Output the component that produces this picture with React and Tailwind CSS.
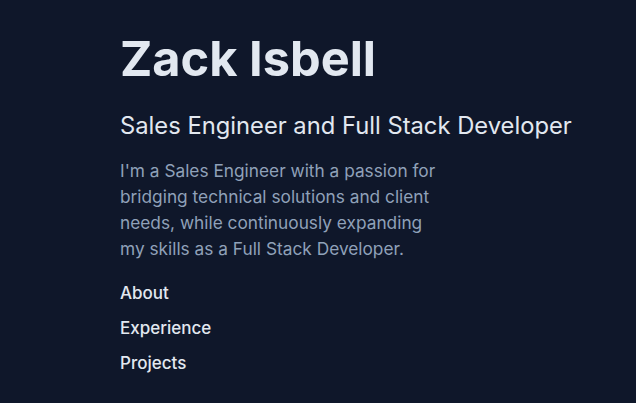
export default function App() {
  return (
    <div
      className="min-h-screen bg-[#0f172a] text-slate-200"
      style={{ fontFamily: "Inter, 'Noto Sans', sans-serif" }}
    >
      <header className="pl-[120px] pt-[35px]">
        <h1 className="text-[48.7px] leading-none font-bold text-slate-200">Zack Isbell</h1>
        <h2 className="mt-[26px] text-[23.75px] leading-8 font-normal text-slate-200">
          Sales Engineer and Full Stack Developer
        </h2>
        <p className="mt-4 max-w-xs text-[17.3px] leading-[26px] text-slate-400">
          I'm a Sales Engineer with a passion for bridging technical solutions and client
          needs, while continuously expanding my skills as a Full Stack Developer.
        </p>
        <nav className="mt-[18px]">
          <ul className="flex flex-col gap-2">
            <li><a href="#about" className="text-[17px] leading-[27px] font-medium text-slate-200">About</a></li>
            <li><a href="#experience" className="text-[17px] leading-[27px] font-medium text-slate-200">Experience</a></li>
            <li><a href="#projects" className="text-[17px] leading-[27px] font-medium text-slate-200">Projects</a></li>
          </ul>
        </nav>
      </header>
    </div>
  );
}
